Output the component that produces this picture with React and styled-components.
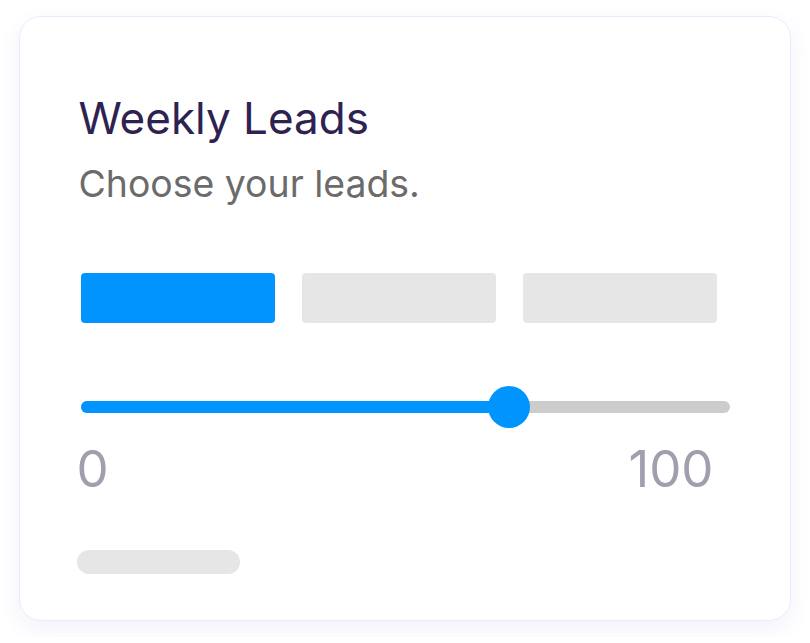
import React from 'react'
import styled, { createGlobalStyle } from 'styled-components'

const GlobalStyle = createGlobalStyle`
  html, body {
    margin: 0;
    padding: 0;
    background: #fff;
    font-family: Inter, "Noto Sans", sans-serif;
  }
`

const Page = styled.div`
  padding: 16px 19px;
`

const Card = styled.section`
  box-sizing: border-box;
  width: 772px;
  height: 605px;
  padding: 75px 60px 0 58.5px;
  background: #fff;
  border: 1.5px solid #ecebfb;
  border-radius: 22px;
  box-shadow: 0 8px 22px rgba(90, 80, 200, 0.08);
  display: flex;
  flex-direction: column;
`

const Title = styled.h1`
  margin: 0;
  font-size: 44px;
  line-height: 52px;
  font-weight: 400;
  color: #2e2250;
`

const Subtitle = styled.p`
  margin: 18px 0 0;
  font-size: 37.4px;
  line-height: 44px;
  font-weight: 400;
  color: #6b6b6b;
`

const Segments = styled.div`
  display: grid;
  grid-template-columns: repeat(3, 194px);
  gap: 27px;
  margin: 67px 0 0 2px;
`

const Segment = styled.div`
  height: 50px;
  border-radius: 4px;
  background: ${p => (p.$active ? '#0094ff' : '#e6e6e6')};
`

const Slider = styled.div`
  height: 42px;
  margin: 63px 0 0 2px;
  display: flex;
  align-items: center;
`

const Track = styled.div`
  position: relative;
  width: 100%;
  height: 12px;
  border-radius: 6px;
  background: #cccccc;
`

const Fill = styled.div`
  height: 100%;
  border-radius: 6px;
  background: #0094ff;
`

const Thumb = styled.div`
  position: absolute;
  top: 50%;
  width: 42px;
  height: 42px;
  border-radius: 50%;
  background: #0094ff;
  transform: translate(-50%, -50%);
`

const Labels = styled.div`
  display: flex;
  justify-content: space-between;
  width: 637px;
  margin: 11px 0 0 -2px;
  font-size: 51px;
  line-height: 60px;
  color: #a09fae;
`

const Pill = styled.div`
  width: 163px;
  height: 24px;
  border-radius: 12px;
  background: #e6e6e6;
  margin: 51px 0 0 -2px;
`

export default function App() {
  const value = 66
  return (
    <>
      <GlobalStyle />
      <Page>
        <Card>
          <Title>Weekly Leads</Title>
          <Subtitle>Choose your leads.</Subtitle>
          <Segments>
            <Segment $active />
            <Segment />
            <Segment />
          </Segments>
          <Slider>
            <Track>
              <Fill style={{ width: `${value}%` }} />
              <Thumb style={{ left: `${value}%` }} />
            </Track>
          </Slider>
          <Labels>
            <span>0</span>
            <span>100</span>
          </Labels>
          <Pill />
        </Card>
      </Page>
    </>
  )
}
